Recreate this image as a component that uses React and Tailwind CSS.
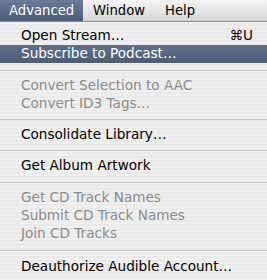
import React from "react";

const font = { fontFamily: '"DejaVu Sans", "Noto Sans", sans-serif' };

function Row({ children, disabled, active, shortcut }) {
  const color = active ? "text-white" : disabled ? "text-[#8c8c8c]" : "text-black";
  const bg = active ? "bg-gradient-to-b from-[#5f708b] to-[#4d5d76]" : "";
  return (
    <div className={`flex h-[18px] items-center justify-between pl-[21px] pr-[14px] text-[13.6px] leading-none ${color} ${bg}`}>
      <span>{children}</span>
      {shortcut && <span>{shortcut}</span>}
    </div>
  );
}

function Sep({ h }) {
  return (
    <div className={`flex items-center ${h}`}>
      <div className="h-px w-full bg-[#c6c6c6]" />
    </div>
  );
}

export default function App() {
  return (
    <div className="h-[280px] w-[267px] overflow-hidden bg-[#ececec]" style={font}>
      <div className="flex h-[21px] items-end bg-gradient-to-b from-[#f4f4f4] via-[#e6e6e6] to-[#d6d6d6] text-[13.2px] leading-none">
        <div className="flex h-[21px] w-[83px] items-center bg-gradient-to-b from-[#6a7c98] to-[#4c5c76] pl-[9px] text-white">Advanced</div>
        <div className="flex h-[21px] items-center pl-[10px] text-black">Window</div>
        <div className="flex h-[21px] items-center pl-[20px] text-black">Help</div>
      </div>
      <div className="h-px bg-[#8e8e8e]" />
      <div className="bg-[repeating-linear-gradient(180deg,#f0f0f0_0px,#f0f0f0_2px,#eaeaea_2px,#eaeaea_4px)] pt-[5px] pb-[20px]">
        <Row shortcut="⌘U">Open Stream…</Row>
        <Row active>Subscribe to Podcast…</Row>
        <Sep h="h-[14px]" />
        <Row disabled>Convert Selection to AAC</Row>
        <Row disabled>Convert ID3 Tags…</Row>
        <Sep h="h-[13px]" />
        <Row>Consolidate Library…</Row>
        <Sep h="h-[13px]" />
        <Row>Get Album Artwork</Row>
        <Sep h="h-[14px]" />
        <Row disabled>Get CD Track Names</Row>
        <Row disabled>Submit CD Track Names</Row>
        <Row disabled>Join CD Tracks</Row>
        <Sep h="h-[15px]" />
        <Row>Deauthorize Audible Account…</Row>
      </div>
    </div>
  );
}
